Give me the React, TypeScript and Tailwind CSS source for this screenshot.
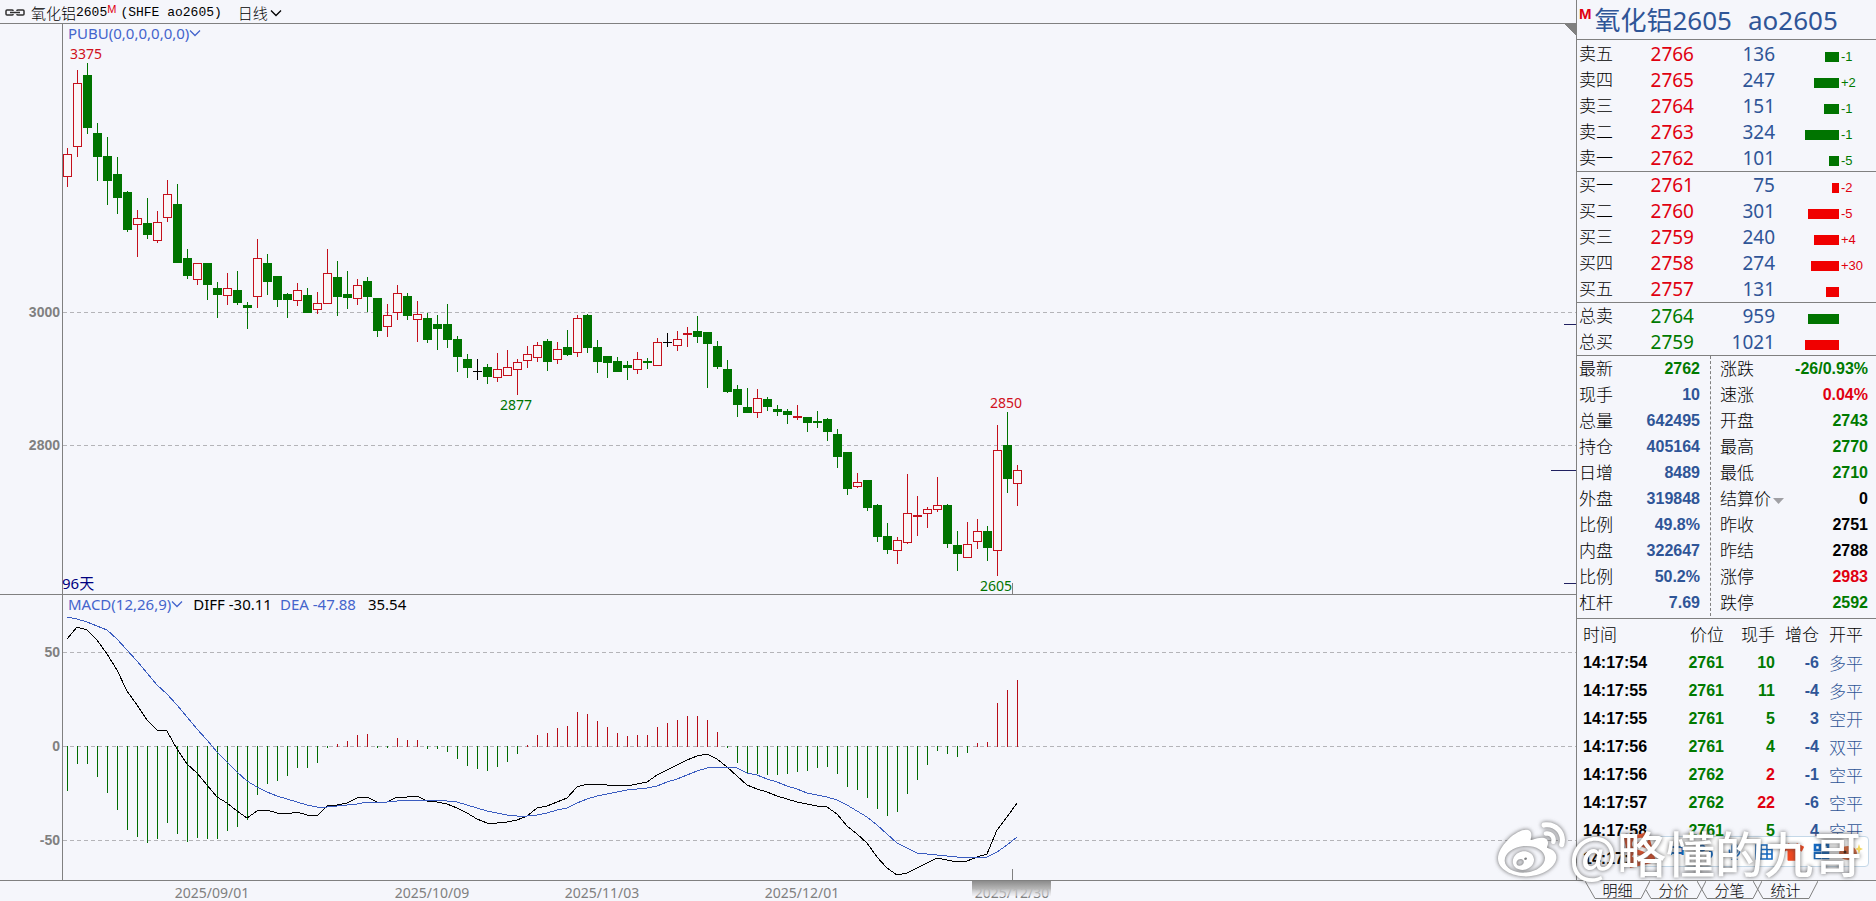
import { FaWeibo, FaTshirt, FaMicrophone } from "react-icons/fa"
import clsx from "clsx"

type Kind = "r" | "g" | "k" | "R"

// kind, high, body top, body bottom, low (r = hollow up, R = thin up, g = down, k = flat)
const CANDLES: [Kind, number, number, number, number][] = [
  ["r", 148, 154, 176, 187], ["r", 70, 83, 146, 157], ["g", 63, 75, 128, 134], ["g", 123, 133, 157, 181],
  ["g", 137, 156, 181, 205], ["g", 157, 174, 198, 214], ["g", 191, 192, 230, 232], ["r", 210, 218, 224, 257],
  ["g", 198, 223, 235, 239], ["r", 211, 222, 240, 243], ["r", 180, 194, 217, 222], ["g", 184, 204, 263, 263],
  ["g", 249, 258, 276, 279], ["r", 263, 263, 279, 285], ["g", 263, 263, 285, 300], ["g", 282, 288, 295, 318],
  ["r", 273, 288, 295, 305], ["g", 271, 290, 303, 305], ["g", 302, 305, 308, 329], ["r", 239, 258, 296, 308],
  ["g", 254, 263, 282, 295], ["g", 276, 276, 300, 307], ["g", 293, 294, 300, 318], ["r", 283, 290, 300, 306],
  ["g", 288, 295, 313, 313], ["r", 292, 303, 309, 314], ["r", 249, 273, 303, 303], ["g", 261, 277, 297, 316],
  ["g", 271, 294, 298, 309], ["r", 279, 285, 298, 305], ["g", 277, 281, 297, 312], ["g", 298, 298, 331, 337],
  ["r", 304, 315, 326, 337], ["r", 285, 293, 312, 320], ["g", 293, 296, 316, 320], ["r", 301, 314, 319, 342],
  ["g", 313, 318, 340, 343], ["g", 315, 324, 329, 350], ["g", 304, 324, 340, 348], ["g", 336, 339, 357, 372],
  ["g", 354, 359, 368, 378], ["k", 359, 371, 372, 380], ["g", 364, 367, 377, 384], ["r", 353, 369, 377, 382],
  ["r", 350, 367, 375, 375], ["r", 359, 362, 369, 395], ["r", 346, 354, 360, 368], ["r", 342, 345, 357, 362],
  ["g", 339, 341, 362, 371], ["r", 342, 349, 359, 364], ["g", 330, 347, 355, 356], ["r", 315, 318, 352, 357],
  ["g", 314, 315, 348, 353], ["g", 340, 347, 362, 373], ["g", 356, 356, 363, 378], ["g", 357, 361, 372, 372],
  ["g", 361, 365, 368, 380], ["r", 352, 359, 369, 374], ["g", 358, 361, 363, 369], ["r", 338, 342, 365, 365],
  ["k", 333, 342, 343, 347], ["r", 331, 339, 345, 351], ["R", 327, 333, 335, 347], ["g", 316, 331, 337, 343],
  ["g", 332, 332, 344, 388], ["g", 341, 346, 367, 369], ["g", 360, 369, 392, 393], ["g", 385, 389, 405, 417],
  ["g", 388, 407, 413, 413], ["r", 389, 398, 412, 418], ["g", 397, 399, 407, 411], ["g", 405, 409, 412, 416],
  ["g", 409, 411, 415, 424], ["R", 405, 416, 418, 420], ["g", 417, 417, 423, 432], ["g", 411, 421, 423, 428],
  ["g", 418, 419, 432, 441], ["g", 429, 434, 457, 468], ["g", 452, 452, 489, 495], ["r", 473, 482, 486, 488],
  ["g", 480, 480, 508, 511], ["g", 504, 505, 537, 542], ["g", 523, 536, 550, 554], ["r", 537, 540, 550, 564],
  ["r", 474, 513, 542, 544], ["R", 496, 515, 517, 536], ["r", 507, 509, 513, 528], ["r", 477, 505, 509, 512],
  ["g", 504, 505, 544, 548], ["g", 531, 545, 554, 571], ["r", 522, 544, 557, 557], ["r", 519, 531, 541, 549],
  ["g", 526, 531, 548, 561], ["r", 425, 450, 550, 576], ["g", 412, 445, 479, 493], ["r", 465, 470, 483, 506],
]

const DIFF = [
  639, 627, 630, 640, 654, 670, 691, 705, 720, 730, 731, 749, 764, 773, 785, 797, 803, 811, 818, 811, 810, 813, 814, 812,
  815, 816, 806, 805, 803, 798, 797, 802, 802, 797, 797, 796, 801, 802, 804, 808, 813, 819, 823, 823, 822, 820, 816, 808,
  806, 802, 798, 787, 784, 784, 785, 785, 786, 784, 782, 775, 770, 765, 760, 756, 754, 759, 767, 776, 785, 789, 792, 796,
  799, 802, 804, 806, 807, 814, 826, 834, 843, 857, 868, 875, 873, 868, 863, 858, 860, 862, 861, 857, 854, 830, 817, 803,
]

const DEA = [
  617, 619, 622, 626, 630, 639, 650, 661, 673, 685, 694, 705, 717, 729, 740, 752, 762, 772, 781, 787, 792, 796, 799, 802,
  805, 807, 807, 806, 805, 804, 802, 802, 802, 801, 800, 800, 800, 800, 801, 802, 805, 808, 811, 813, 815, 816, 816, 815,
  813, 810, 808, 803, 799, 796, 794, 792, 790, 789, 788, 786, 782, 779, 775, 771, 768, 767, 767, 768, 773, 775, 779, 782,
  786, 789, 793, 795, 797, 800, 805, 811, 817, 825, 834, 843, 848, 853, 854, 855, 856, 857, 858, 857, 857, 852, 845, 837,
]

const HIST = [
  790, 763, 763, 776, 792, 809, 829, 836, 842, 838, 822, 833, 841, 837, 838, 838, 830, 826, 819, 794, 783, 780, 775, 767,
  767, 762, 747, 744, 741, 735, 734, 747, 747, 738, 740, 740, 748, 748, 751, 758, 765, 768, 770, 766, 761, 753, 745, 735,
  733, 728, 726, 712, 714, 721, 727, 733, 736, 735, 735, 727, 723, 720, 716, 716, 720, 732, 747, 762, 773, 773, 774, 774,
  773, 771, 770, 767, 766, 773, 786, 789, 797, 808, 815, 811, 793, 779, 764, 750, 753, 756, 752, 743, 742, 703, 690, 680,
]

const ZERO = 746
const barX = (i: number) => 67 + i * 10
const line = (ys: number[]) => ys.map((y, i) => `${barX(i)},${y}`).join(" ")

const DATES: [number, string][] = [
  [212, "2025/09/01"],
  [432, "2025/10/09"],
  [602, "2025/11/03"],
  [802, "2025/12/01"],
  [1012, "2025/12/30"],
]

type BookRow = { label: string; price: string; count: string; bar: number; delta: string }

const ASKS: BookRow[] = [
  { label: "卖五", price: "2766", count: "136", bar: 14, delta: "-1" },
  { label: "卖四", price: "2765", count: "247", bar: 25, delta: "+2" },
  { label: "卖三", price: "2764", count: "151", bar: 15, delta: "-1" },
  { label: "卖二", price: "2763", count: "324", bar: 34, delta: "-1" },
  { label: "卖一", price: "2762", count: "101", bar: 10, delta: "-5" },
]

const BIDS: BookRow[] = [
  { label: "买一", price: "2761", count: "75", bar: 7, delta: "-2" },
  { label: "买二", price: "2760", count: "301", bar: 31, delta: "-5" },
  { label: "买三", price: "2759", count: "240", bar: 25, delta: "+4" },
  { label: "买四", price: "2758", count: "274", bar: 28, delta: "+30" },
  { label: "买五", price: "2757", count: "131", bar: 13, delta: "" },
]

const BLUE = "text-[#2f5597]"
const GREEN = "text-[#007a00]"
const RED = "text-[#e00010]"

const STATS: [string, string, string, string, string, string][] = [
  ["最新", "2762", GREEN, "涨跌", "-26/0.93%", GREEN],
  ["现手", "10", BLUE, "速涨", "0.04%", RED],
  ["总量", "642495", BLUE, "开盘", "2743", GREEN],
  ["持仓", "405164", BLUE, "最高", "2770", GREEN],
  ["日增", "8489", BLUE, "最低", "2710", GREEN],
  ["外盘", "319848", BLUE, "结算价", "0", "text-black"],
  ["比例", "49.8%", BLUE, "昨收", "2751", "text-black"],
  ["内盘", "322647", BLUE, "昨结", "2788", "text-black"],
  ["比例", "50.2%", BLUE, "涨停", "2983", RED],
  ["杠杆", "7.69", BLUE, "跌停", "2592", GREEN],
]

const TICKS: [string, string, string, string, string, string][] = [
  ["14:17:54", "2761", "10", GREEN, "-6", "多平"],
  ["14:17:55", "2761", "11", GREEN, "-4", "多平"],
  ["14:17:55", "2761", "5", GREEN, "3", "空开"],
  ["14:17:56", "2761", "4", GREEN, "-4", "双平"],
  ["14:17:56", "2762", "2", RED, "-1", "空平"],
  ["14:17:57", "2762", "22", RED, "-6", "空平"],
  ["14:17:58", "2761", "5", GREEN, "4", "空开"],
  ["14:17:58", "", "", GREEN, "", ""],
]

function Chevron() {
  return (
    <svg width="12" height="8" viewBox="0 0 12 8" fill="none" stroke="currentColor" strokeWidth="1.3">
      <path d="M1 1.5l5 5 5-5" />
    </svg>
  )
}

function ChartHeader() {
  return (
    <header className="flex h-6 items-center border-b border-[#808080] pt-0.5 pl-[5px] text-[15px] leading-5 font-light text-black">
      <svg width="20" height="7" viewBox="0 0 20 7" fill="none" stroke="#303030" strokeWidth="1.5">
        <path d="M8 2V1.500Q8 1 7 1H2Q1 1 1 2v3q0 1 1 1h5q1 0 1-.5V5M12 2v-.5q0-.5 1-.5h5q1 0 1 1v3q0 1-1 1h-5q-1 0-1-.5V5M5 3.500h10" />
      </svg>
      <span className="ml-1.5 flex items-center">
        氧化铝<span className="font-['Liberation_Mono'] text-[13px]">2605</span>
        <sup className="top-[-3px] font-['Liberation_Sans'] text-[11px] leading-none text-[#e00010]">M</sup>
      </span>
      <span className="ml-1 font-['Liberation_Mono'] text-[13px] whitespace-pre">(SHFE ao2605)</span>
      <button className="ml-4 flex items-center gap-0.5">
        日线
        <Chevron />
      </button>
    </header>
  )
}

function Candle({ x, row }: { x: number; row: [Kind, number, number, number, number] }) {
  const [kind, high, top, bottom, low] = row
  if (kind === "r") {
    return (
      <g fill="#c4101c">
        <rect x={x} y={high} width="1" height={top - high} />
        <rect x={x - 4 + 0.5} y={top + 0.5} width="8" height={bottom - top} fill="#fbf6f8" stroke="#c4101c" />
        <rect x={x} y={bottom} width="1" height={Math.max(low - bottom, 0)} />
      </g>
    )
  }
  const fill = kind === "g" ? "#007400" : kind === "R" ? "#c4101c" : "#000000"
  return (
    <g fill={fill}>
      <rect x={x} y={high} width="1" height={low - high} />
      <rect x={x - 4} y={top} width="9" height={bottom - top} />
    </g>
  )
}

function GridLine({ y, label }: { y: number; label: string }) {
  return (
    <>
      <line x1="63" x2="100%" y1={y + 0.5} y2={y + 0.5} stroke="#b4b4b8" strokeDasharray="4 3" />
      <text x="60" y={y + 5} textAnchor="end" className="fill-[#808080] font-['Liberation_Sans'] text-[14px] font-bold">
        {label}
      </text>
    </>
  )
}

function PricePane() {
  return (
    <section className="relative border-b border-[#808080]">
      <svg className="block h-[570px] w-full" shapeRendering="crispEdges">
        <g transform="translate(0 -24)">
          <GridLine y={312} label="3000" />
          <GridLine y={445} label="2800" />
          <rect x="62" y="24" width="1" height="570" fill="#808080" />
          {CANDLES.map((row, i) => (
            <Candle key={i} x={barX(i)} row={row} />
          ))}
          <g textAnchor="middle" className="text-[14px]">
            <text x="86" y="59" fill="#d01020">3375</text>
            <text x="516" y="410" fill="#007400">2877</text>
            <text x="1006" y="408" fill="#d01020">2850</text>
            <text x="996" y="591" fill="#007400">2605</text>
          </g>
          <text x="62" y="589" className="text-[15px]" fill="#000080">96天</text>
          <rect x="1012" y="583" width="1" height="11" fill="#808080" />
          <svg x="100%" y="0" overflow="visible">
            <path d="M-12 24H0V35z" fill="#808080" />
            <path d="M-12 324.5H0M-25 470.5H0M-12 583.5H0" stroke="#202060" />
          </svg>
        </g>
      </svg>
      <button className="absolute top-0 left-[68px] flex items-center text-[15px] leading-[18px] text-[#4464cc]">
        PUBU(0,0,0,0,0,0)
        <Chevron />
      </button>
    </section>
  )
}

function MacdPane() {
  return (
    <section className="relative border-b border-[#808080]">
      <svg className="block h-[285px] w-full" shapeRendering="crispEdges">
        <g transform="translate(0 -595)">
          <GridLine y={652} label="50" />
          <GridLine y={ZERO} label="0" />
          <GridLine y={840} label="-50" />
          <rect x="62" y="595" width="1" height="285" fill="#808080" />
          {HIST.map((y, i) => (
            <rect
              key={i}
              x={barX(i)}
              y={Math.min(y, ZERO)}
              width="1"
              height={Math.abs(y - ZERO) + 1}
              fill={y < ZERO ? "#b80c18" : "#006c00"}
            />
          ))}
          <polyline points={line(DIFF)} fill="none" stroke="#000000" />
          <polyline points={line(DEA)} fill="none" stroke="#3a5cc0" />
          <rect x="1012" y="869" width="1" height="11" fill="#808080" />
        </g>
      </svg>
      <div className="absolute top-0 left-[68px] flex items-center text-[15px] leading-[18px] text-black">
        <button className="flex items-center text-[#4464cc]">
          MACD(12,26,9)
          <Chevron />
        </button>
        <span className="ml-2.5">DIFF -30.11</span>
        <span className="ml-2 text-[#4464cc]">DEA -47.88</span>
        <span className="ml-3">35.54</span>
      </div>
    </section>
  )
}

function DateAxis() {
  return (
    <svg className="block h-5 w-full">
      <defs>
        <linearGradient id="cursor" x1="0" x2="0" y1="0" y2="1">
          <stop offset="0" stopColor="#8c8c8c" />
          <stop offset="0.5" stopColor="#b4b4b4" />
          <stop offset="1" stopColor="#e8e8ec" stopOpacity="0.4" />
        </linearGradient>
      </defs>
      {DATES.map(([x, label]) => (
        <text key={label} x={x} y="17" textAnchor="middle" fill="#808080" className="text-[14px]">
          {label}
        </text>
      ))}
      <rect x="972" y="0" width="79" height="15" fill="url(#cursor)" />
    </svg>
  )
}

function Book({ rows, color, bar, className }: { rows: BookRow[]; color: string; bar: string; className?: string }) {
  return (
    <div className={clsx("border-[#808080]", className)}>
      <table className="w-full table-fixed">
        <colgroup>
          <col className="w-10" />
          <col className="w-[77px]" />
          <col className="w-[81px]" />
          <col className="w-16" />
          <col />
        </colgroup>
        <tbody>
          {rows.map((row) => (
            <tr key={row.label} className="h-[26px] leading-[26px]">
              <th scope="row" className="pl-0.5 text-left text-[17px] font-light">{row.label}</th>
              <td className={clsx("text-right text-[19px]", color)}>{row.price}</td>
              <td className={clsx("text-right text-[19px]", BLUE)}>{row.count}</td>
              <td className="pt-1.5">
                <div className={clsx("ml-auto h-2.5", bar)} style={{ width: row.bar }} />
              </td>
              <td
                className={clsx(
                  "pt-1.5 pl-0.5 font-['Liberation_Sans'] text-[13px] leading-4",
                  bar === "bg-[#007400]" ? GREEN : RED,
                )}
              >
                {row.delta}
              </td>
            </tr>
          ))}
        </tbody>
      </table>
    </div>
  )
}

function Stats() {
  return (
    <div className="grid grid-cols-[134px_1fr] border-b border-[#808080] pb-0.5 leading-[26px]">
      <dl className="border-r border-dashed border-[#808080]">
        {STATS.map(([label, value, color], i) => (
          <div key={i} className="flex h-[26px] justify-between pr-2.5 pl-0.5">
            <dt className="text-[17px] font-light">{label}</dt>
            <dd className={clsx("font-['Liberation_Sans'] text-[16px] font-bold", color)}>{value}</dd>
          </div>
        ))}
      </dl>
      <dl>
        {STATS.map(([, , , label, value, color]) => (
          <div key={label} className="flex h-[26px] justify-between pr-2 pl-[9px]">
            <dt className="flex text-[17px] font-light">
              {label}
              {label === "结算价" && (
                <svg className="mt-3 ml-0.5" width="11" height="6" viewBox="0 0 11 6">
                  <path d="M0 0h11L5.5 6z" fill="#a0a0a4" />
                </svg>
              )}
            </dt>
            <dd className={clsx("font-['Liberation_Sans'] text-[16px] font-bold", color)}>{value}</dd>
          </div>
        ))}
      </dl>
    </div>
  )
}

function Ticks() {
  return (
    <div className="flex-1 pt-px">
      <table className="w-full table-fixed">
        <colgroup>
          <col className="w-20" />
          <col className="w-[67px]" />
          <col className="w-[51px]" />
          <col className="w-11" />
          <col />
        </colgroup>
        <thead>
          <tr className="h-[29px] text-right text-[17px] leading-[29px]">
            <th className="pl-1.5 text-left font-light">时间</th>
            <th className="font-light">价位</th>
            <th className="font-light">现手</th>
            <th className="font-light">增仓</th>
            <th className="pl-2.5 text-left font-light">开平</th>
          </tr>
        </thead>
        <tbody>
          {TICKS.map(([time, price, lots, lotColor, change, side], i) => (
            <tr key={i} className="h-7 text-right font-['Liberation_Sans'] text-[16px] leading-7 font-bold">
              <td className="pl-1.5 text-left">{time}</td>
              <td className={GREEN}>{price}</td>
              <td className={lotColor}>{lots}</td>
              <td className={BLUE}>{change}</td>
              <td className={clsx("pl-2.5 text-left font-['Noto_Sans_CJK_SC'] text-[17px] font-light", BLUE)}>{side}</td>
            </tr>
          ))}
        </tbody>
      </table>
    </div>
  )
}

function Tabs() {
  return (
    <nav className="flex h-[21px] border-t border-[#808080] pl-[9px]">
      {["明细", "分价", "分笔", "统计"].map((tab, i) => (
        <button
          key={tab}
          className={clsx("relative h-[18px] w-[65px] text-[15px] leading-4 font-light", i > 0 && "-ml-[9px]")}
        >
          <svg className="absolute inset-0" width="65" height="18" fill="none" stroke="#808080">
            <path d={i === 1 ? "M5 9l5 8.500h46L65 0" : "M0 0l10 17.500h46L65 0"} />
          </svg>
          {tab}
        </button>
      ))}
    </nav>
  )
}

function ImeBar() {
  const item = "flex w-[29px] items-center justify-center"
  return (
    <div className="absolute right-[7px] bottom-[34px] flex h-[31px] w-[237px] rounded-sm border border-[#c4d8e8] bg-white pl-[29px] text-[#1468c0]">
      <button aria-label="输入法" className="absolute -top-1.5 -left-3">
        <svg width="36" height="38" viewBox="0 0 36 38">
          <path d="M3 7l24-6 8 30-26 6z" fill="#e8542c" />
          <path d="M26 11c-5-4-14-2-13 3 1 4 13 3 13 8 0 5-9 6-14 2" fill="none" stroke="#fff" strokeWidth="4" />
        </svg>
      </button>
      <button className={clsx(item, "text-[17px] font-bold")}>中</button>
      <button className={item} aria-label="标点">
        <svg width="16" height="16" viewBox="0 0 16 16" fill="none" stroke="currentColor" strokeWidth="2">
          <circle cx="4" cy="4" r="2.500" />
          <path d="M11 8h2.500c1 3 0 5-3 6" />
        </svg>
      </button>
      <button className={item} aria-label="语音"><FaMicrophone size={17} /></button>
      <button className={item} aria-label="键盘">
        <svg width="18" height="16" viewBox="0 0 18 16" fill="none" stroke="currentColor" strokeWidth="1.6">
          <path d="M1 1h16v14H1zM1 5.500h16M1 10h16M6 1v14M12 1v14" />
        </svg>
      </button>
      <button className={clsx(item, "text-[#f04820]")} aria-label="皮肤"><FaTshirt size={22} /></button>
      <button className={item} aria-label="工具">
        <svg width="17" height="17" viewBox="0 0 17 17" fill="none" stroke="currentColor" strokeWidth="2.600">
          <path d="M2 2h5v5H2zM10 2h5v5h-5zM2 10h5v5H2zM10 10h5v5h-5z" />
        </svg>
      </button>
      <button className={item} aria-label="表情">
        <svg width="25" height="18" viewBox="0 0 25 18">
          <ellipse cx="10" cy="10" rx="9" ry="7" fill="#e06a3c" />
          <circle cx="7" cy="9" r="1.500" fill="#402010" />
          <circle cx="13" cy="9" r="1.500" fill="#402010" />
          <path d="M21 1l1.200 3.800L25 6l-2.800 1.200L21 11l-1.200-3.800L17 6l2.800-1.200z" fill="#f4d860" />
        </svg>
      </button>
    </div>
  )
}

function Watermark() {
  return (
    <div className="pointer-events-none absolute right-[14px] bottom-[16px] flex items-center gap-1 text-white drop-shadow-[0_0_2px_rgba(60,60,60,0.8)]">
      <FaWeibo size={67} />
      <span className="font-['Noto_Sans_CJK_SC'] text-[49px] leading-[60px] font-medium whitespace-nowrap">@略懂的九哥</span>
    </div>
  )
}

export default function App() {
  return (
    <div className="relative flex min-h-screen overflow-hidden bg-[#f5f6fb] font-['Noto_Sans','Noto_Sans_CJK_SC',sans-serif] text-black">
      <main className="min-w-0 flex-1">
        <ChartHeader />
        <PricePane />
        <MacdPane />
        <DateAxis />
      </main>
      <aside className="flex w-[300px] shrink-0 flex-col">
        <div className="flex flex-1 flex-col border-l border-[#808080]">
          <h1 className="flex h-10 items-center border-b border-[#808080] pt-px pl-0.5 text-[26px] leading-[38px] text-[#2f5597]">
            <span className="self-start pt-[5px] font-['Liberation_Sans'] text-[15px] leading-4 font-bold text-[#e00010]">M</span>
            <span className="ml-[3px]">氧化铝2605</span>
            <span className="ml-4">ao2605</span>
          </h1>
          <Book rows={ASKS} color={RED} bar="bg-[#007400]" className="border-b pt-px" />
          <Book rows={BIDS} color={RED} bar="bg-[#f00000]" className="border-b" />
          <div className="border-b border-[#808080]">
            <Book
              rows={[{ label: "总卖", price: "2764", count: "959", bar: 31, delta: "" }]}
              color={GREEN}
              bar="bg-[#007400]"
            />
            <Book
              rows={[{ label: "总买", price: "2759", count: "1021", bar: 34, delta: "" }]}
              color={GREEN}
              bar="bg-[#f00000]"
            />
          </div>
          <Stats />
          <Ticks />
        </div>
        <Tabs />
      </aside>
      <ImeBar />
      <Watermark />
    </div>
  )
}
